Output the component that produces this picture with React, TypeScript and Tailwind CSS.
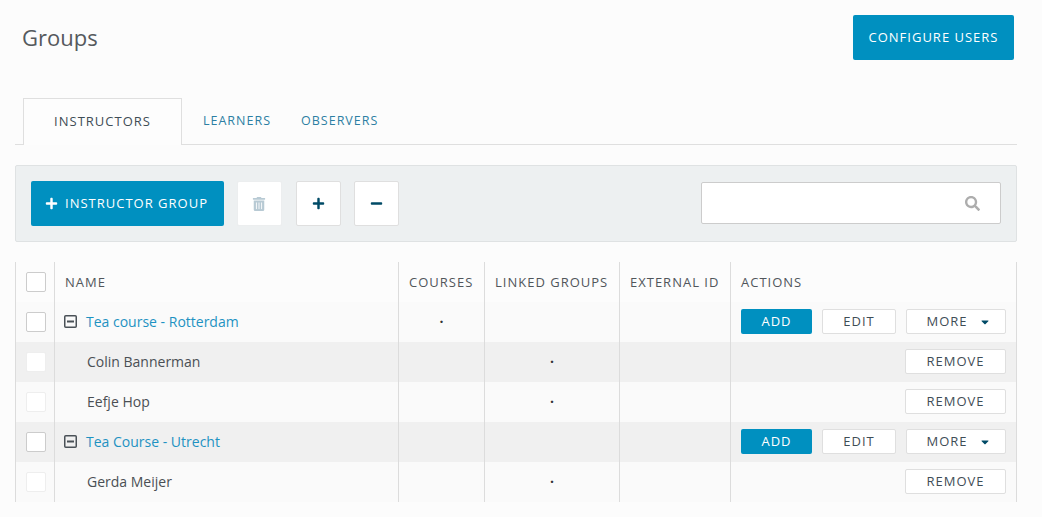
import { FaCaretDown, FaMinus, FaPlus, FaSearch, FaTrashAlt } from 'react-icons/fa';

const cols = 'grid grid-cols-[39px_344px_86px_135px_111px_287px]';
const cell = 'border-l border-[#dcdcdc] flex items-center';

function Check({ light }: { light?: boolean }) {
  return (
    <span
      className={`block w-5 h-5 bg-white rounded-[2px] border ${light ? 'border-[#eeeeee]' : 'border-[#cccccc]'}`}
    />
  );
}

function OutlineBtn({ label, className }: { label: string; className: string }) {
  return (
    <button className={`h-[25px] bg-white border border-[#dfdfdf] rounded-[2px] text-[13px] tracking-[1px] text-[#3f4d56] flex items-center justify-center ${className}`}>
      {label}
    </button>
  );
}

function GroupRow({ name, shade, courses }: { name: string; shade?: boolean; courses?: boolean }) {
  return (
    <div className={`${cols} h-10 border-r border-[#dcdcdc] ${shade ? 'bg-[#f0f0f0]' : 'bg-[#fafafa]'}`}>
      <div className={`${cell} pl-[10px]`}><Check /></div>
      <div className={`${cell} pl-[9px] gap-[9px] text-[14px] text-[#1e92c2]`}>
        <svg width="13" height="13" viewBox="0 0 13 13" className="shrink-0 mb-[1px]">
          <rect x="0.75" y="0.75" width="11.5" height="11.5" rx="1" fill="none" stroke="#4a5157" strokeWidth="1.5" />
          <rect x="3" y="5.5" width="7" height="2" fill="#4a5157" />
        </svg>
        <span className="pb-[2px]">{name}</span>
      </div>
      <div className={`${cell} justify-center pb-[2px] text-[14px] font-bold text-[#333]`}>{courses ? '·' : ''}</div>
      <div className={cell} />
      <div className={cell} />
      <div className={`${cell} pl-[10px] pb-[1px]`}>
        <button className="w-[71px] h-[25px] bg-[#0090c0] rounded-[2px] text-white text-[13px] tracking-[1px]">ADD</button>
        <OutlineBtn label="EDIT" className="w-[74px] ml-[10px]" />
        <button className="w-[100px] h-[25px] ml-[10px] pl-[5px] bg-white border border-[#dfdfdf] rounded-[2px] text-[13px] tracking-[1px] text-[#3f4d56] flex items-center justify-center gap-[11px]">
          MORE
          <FaCaretDown className="text-[#004a66] text-[12px]" />
        </button>
      </div>
    </div>
  );
}

function MemberRow({ name, shade }: { name: string; shade?: boolean }) {
  return (
    <div className={`${cols} h-10 border-r border-[#dcdcdc] ${shade ? 'bg-[#f0f0f0]' : 'bg-[#fafafa]'}`}>
      <div className={`${cell} pl-[10px]`}><Check light /></div>
      <div className={`${cell} pl-[32px] pb-[2px] text-[14px] text-[#4a4f54]`}>{name}</div>
      <div className={cell} />
      <div className={`${cell} justify-center pb-[2px] text-[14px] font-bold text-[#333]`}>·</div>
      <div className={cell} />
      <div className={`${cell} justify-end pr-[11px] pb-[1px]`}>
        <OutlineBtn label="REMOVE" className="w-[101px]" />
      </div>
    </div>
  );
}

function Header() {
  const th = `${cell} pl-[10px] pt-[1px] text-[13px] tracking-[1px] text-[#51565b]`;
  return (
    <div className={`${cols} h-10 border-r border-[#dcdcdc] bg-[#fcfcfc]`}>
      <div className={`${cell} pl-[10px]`}><Check /></div>
      <div className={th}>NAME</div>
      <div className={th}>COURSES</div>
      <div className={th}>LINKED GROUPS</div>
      <div className={th}>EXTERNAL ID</div>
      <div className={th}>ACTIONS</div>
    </div>
  );
}

export default function App() {
  return (
    <div className="w-[1042px] h-[517px] overflow-hidden bg-[#fcfcfc] font-['Open_Sans',sans-serif] pt-[15px] px-[15px]">
      <header className="flex justify-between items-center h-[45px] pl-[7px] pr-[13px] w-[1012px]">
        <h1 className="text-[22px] text-[#55595d] font-normal">Groups</h1>
        <button className="w-[161px] h-[45px] bg-[#0090c0] rounded-[2px] text-white text-[13px] tracking-[1px]">
          CONFIGURE USERS
        </button>
      </header>

      <nav className="mt-[38px] h-[47px] w-[1002px] flex border-b border-[#dfdfdf] pl-2">
        <div className="w-[159px] h-[47px] bg-[#fdfdfd] border border-b-0 border-[#dfdfdf] flex items-center justify-center text-[13px] tracking-[1px] text-[#3f4d56]">
          INSTRUCTORS
        </div>
        <div className="pl-[21px] flex items-center h-[46px] text-[12.5px] tracking-[1px] text-[#2d7fa3]">LEARNERS</div>
        <div className="pl-[30px] flex items-center h-[46px] text-[12.5px] tracking-[1px] text-[#2d7fa3]">OBSERVERS</div>
      </nav>

      <section className="mt-5 w-[1002px] h-[77px] bg-[#edf0f1] border border-[#dfe2e3] rounded-[2px] flex items-center pl-[15px] pr-[15px]">
        <button className="w-[193px] h-[45px] pr-[2px] bg-[#0090c0] rounded-[2px] text-white text-[13px] tracking-[1px] flex items-center justify-center gap-[7px]">
          <FaPlus className="text-[13px]" />
          INSTRUCTOR GROUP
        </button>
        <button className="w-[45px] h-[45px] ml-[13px] pr-[1px] bg-white border border-[#eceeef] rounded-[2px] flex items-center justify-center">
          <FaTrashAlt className="text-[14px] text-[#b8cad4]" />
        </button>
        <button className="w-[45px] h-[45px] ml-[14px] bg-white border border-[#dfdfdf] rounded-[2px] flex items-center justify-center">
          <FaPlus className="text-[13px] text-[#004a66]" />
        </button>
        <button className="w-[45px] h-[45px] ml-[13px] bg-white border border-[#dfdfdf] rounded-[2px] flex items-center justify-center">
          <FaMinus className="text-[13px] text-[#004a66]" />
        </button>
        <div className="ml-auto mb-[1px] w-[300px] h-[42px] bg-white border border-[#cccccc] rounded-[2px] flex items-center justify-end pr-[20px]">
          <FaSearch className="text-[15px] text-[#adadad]" />
        </div>
      </section>

      <main className="mt-5 w-[1002px]">
        <Header />
        <GroupRow name="Tea course - Rotterdam" courses />
        <MemberRow name="Colin Bannerman" shade />
        <MemberRow name="Eefje Hop" />
        <GroupRow name="Tea Course - Utrecht" shade />
        <MemberRow name="Gerda Meijer" />
      </main>
    </div>
  );
}
